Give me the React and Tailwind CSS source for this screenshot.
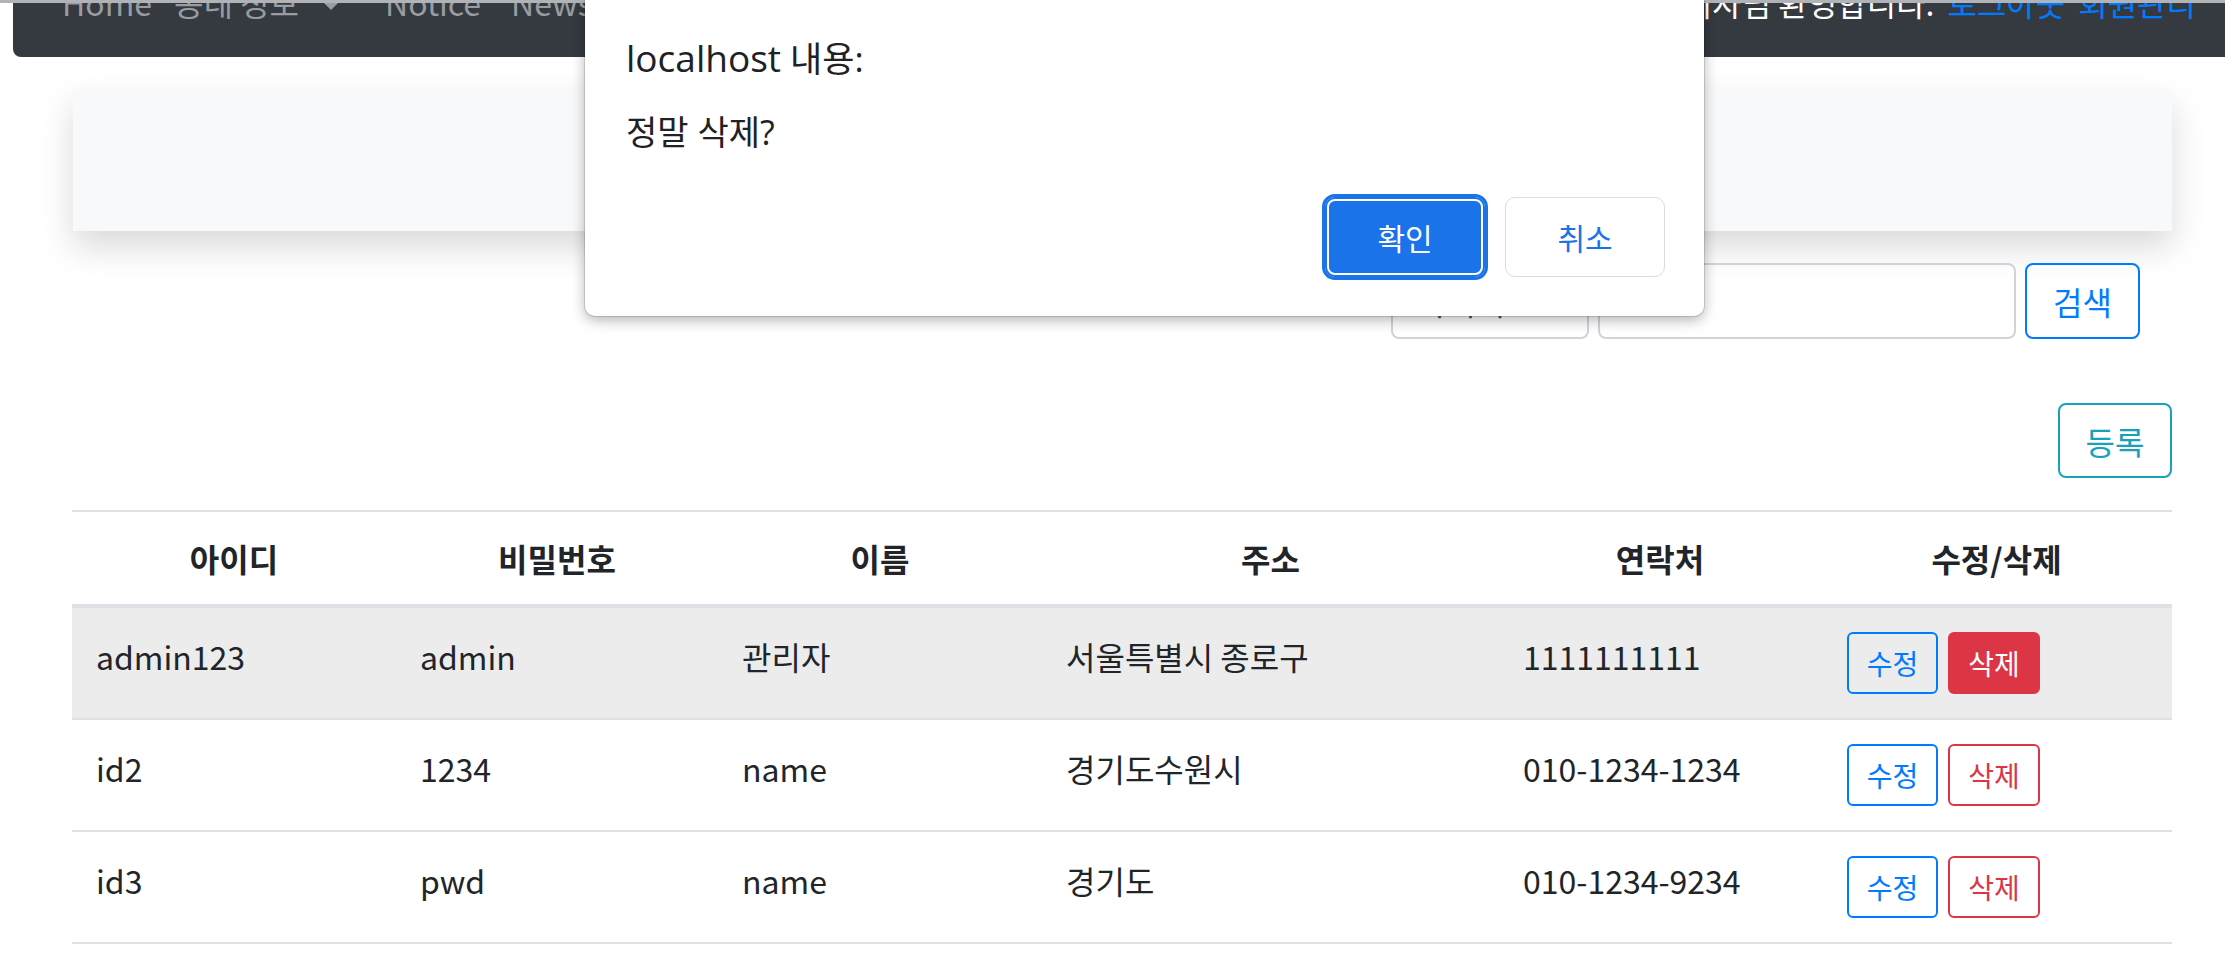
import React from "react";

const FONT = { fontFamily: '"Noto Sans CJK KR", "Noto Sans", sans-serif' };
const DLG_FONT = { fontFamily: '"Open Sans", "Noto Sans CJK KR", sans-serif' };

const rows = [
  { id: "admin123", pw: "admin", name: "관리자", addr: "서울특별시 종로구", tel: "1111111111", hover: true },
  { id: "id2", pw: "1234", name: "name", addr: "경기도수원시", tel: "010-1234-1234" },
  { id: "id3", pw: "pwd", name: "name", addr: "경기도", tel: "010-1234-9234" },
];

const cols = "grid grid-cols-[324px_322px_324px_457px_322px_351px]";

export default function App() {
  return (
    <div className="relative w-[2225px] h-[957px] overflow-hidden bg-white text-[#212529]" style={FONT}>
      {/* top strip */}
      <div className="absolute left-0 top-0 w-full h-[3px] bg-[#b1b3b6] z-10" />

      {/* navbar */}
      <nav className="ml-[13px] h-[57px] bg-[#343a40] rounded-bl-[8px] flex items-end pb-[31px] text-[32px] leading-[48px]">
        <div className="flex items-end pl-[49px] text-[#999ca0]">
          <span className="w-[112px]">Home</span>
          <span className="w-[211px] flex items-end">
            <span>동네 정보</span>
            <span className="ml-[22px] mb-[16px] w-0 h-0 border-t-[10px] border-t-[#999ca0] border-l-[10px] border-l-transparent border-r-[10px] border-r-transparent" />
          </span>
          <span className="w-[126px]">Notice</span>
          <span>News</span>
        </div>
        <div className="flex-1 flex justify-end items-end pr-[29px] gap-[13px]">
          <span className="text-white">관리자님 환영합니다.</span>
          <span className="text-[#007bff]">로그아웃</span>
          <span className="text-[#007bff]">회원관리</span>
        </div>
      </nav>

      {/* jumbotron */}
      <div className="ml-[73px] mt-[32px] w-[2099px] h-[142px] bg-[#f8f9fa] shadow-[0_16px_32px_rgba(0,0,0,0.15)]" />

      {/* search */}
      <div className="mt-[32px] flex justify-end pr-[85px] gap-[9px] text-[32px] leading-[48px]">
        <div className="w-[198px] h-[76px] border-2 border-[#ced4da] rounded-[8px] px-[24px] py-[12px] text-[#495057]">아이디</div>
        <div className="w-[418px] h-[76px] border-2 border-[#ced4da] rounded-[8px]" />
        <div className="w-[115px] h-[76px] border-2 border-[#007bff] rounded-[8px] text-[#007bff] flex items-center justify-center">검색</div>
      </div>

      {/* register */}
      <div className="mt-[64px] flex justify-end pr-[53px] text-[32px] leading-[48px]">
        <div className="w-[114px] h-[75px] border-2 border-[#17a2b8] rounded-[8px] text-[#17a2b8] flex items-center justify-center">등록</div>
      </div>

      {/* table */}
      <div className="ml-[72px] mt-[32px] w-[2100px] text-[32px] leading-[48px]">
        <div className={`${cols} border-t-2 border-b-4 border-[#dee2e6] font-bold text-center`}>
          {["아이디", "비밀번호", "이름", "주소", "연락처", "수정/삭제"].map((h) => (
            <div key={h} className="py-[22px]">{h}</div>
          ))}
        </div>
        {rows.map((r, i) => (
          <div key={r.id} className={`${cols} ${i > 0 ? "border-t-2 border-[#dee2e6]" : ""} ${r.hover ? "bg-[#ececec]" : ""}`}>
            <div className="px-[24px] py-[24px]">{r.id}</div>
            <div className="px-[24px] py-[24px]">{r.pw}</div>
            <div className="px-[24px] py-[24px]">{r.name}</div>
            <div className="px-[24px] py-[24px]">{r.addr}</div>
            <div className="px-[24px] py-[24px]">{r.tel}</div>
            <div className="px-[26px] py-[24px] flex gap-[10px] text-[28px] leading-[42px]">
              <div className="w-[91px] h-[62px] border-2 border-[#007bff] rounded-[6px] text-[#007bff] flex items-center justify-center">수정</div>
              {r.hover ? (
                <div className="w-[92px] h-[62px] border-2 border-[#dc3545] bg-[#dc3545] rounded-[6px] text-white flex items-center justify-center">삭제</div>
              ) : (
                <div className="w-[92px] h-[62px] border-2 border-[#dc3545] rounded-[6px] text-[#dc3545] flex items-center justify-center">삭제</div>
              )}
            </div>
          </div>
        ))}
        <div className="border-t-2 border-[#dee2e6]" />
      </div>

      {/* alert dialog */}
      <div
        className="absolute left-[585px] top-0 w-[1119px] h-[316px] bg-white rounded-b-[10px] z-20 shadow-[0_0_0_1px_rgba(0,0,0,0.12),0_4px_14px_rgba(0,0,0,0.3)] text-[#202124]"
        style={DLG_FONT}
      >
        <div className="pl-[41px] pt-[38px] text-[34px] leading-[40px]">
          <div>
            <span className="text-[37px]">localhost</span>
            <span className="text-[35px]"> 내용:</span>
          </div>
          <div className="mt-[33px]">정말 삭제?</div>
        </div>
        <div className="flex justify-end gap-[20px] pr-[39px] mt-[45px] text-[30px]" style={FONT}>
          <div className="w-[160px] h-[80px] rounded-[10px] bg-[#1a73e8] text-white flex items-center justify-center outline-[3px] outline-solid outline-[#1a73e8] shadow-[inset_0_0_0_2px_#1a73e8,inset_0_0_0_4px_#ffffff]">
            확인
          </div>
          <div className="w-[160px] h-[80px] rounded-[10px] border border-[#dadce0] text-[#1a73e8] flex items-center justify-center">
            취소
          </div>
        </div>
      </div>
    </div>
  );
}
